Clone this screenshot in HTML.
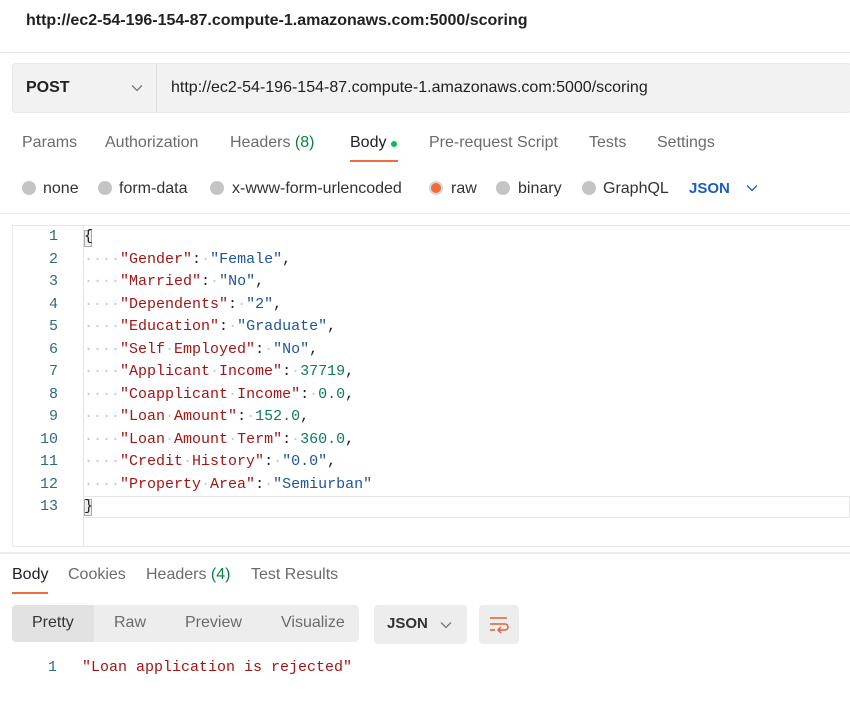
<!DOCTYPE html>
<html><head><meta charset="utf-8"><style>
*{margin:0;padding:0;box-sizing:border-box}
body{width:850px;height:718px;background:#fff;font-family:"Liberation Sans",sans-serif;color:#212121;position:relative;overflow:hidden}
.a{position:absolute;white-space:pre}
.t{font-size:16px;color:#6b6b6b}
.rd{position:absolute;width:14px;height:14px;border-radius:50%;background:#c4c4c4}
.code{position:absolute;left:0;font-family:"Liberation Mono",monospace;font-size:15px}
.ln{position:absolute;width:58px;text-align:right;color:#2d6a8a;font-family:"Liberation Mono",monospace;font-size:15px}
.k{color:#a31515}.s{color:#1c5599}.n{color:#0e7a63}.d{color:#c8c8c8}
</style></head><body>
<div class="a" style="left:26px;top:12px;font-size:16px;font-weight:bold;color:#212121">http://ec2-54-196-154-87.compute-1.amazonaws.com:5000/scoring</div>
<div class="a" style="left:0;top:52px;width:850px;height:1px;background:#e6e6e6"></div>
<div class="a" style="left:12px;top:63px;width:840px;height:50px;background:#f2f2f2;border:1px solid #e8e8e8;border-radius:4px"></div>
<div class="a" style="left:156px;top:64px;width:1px;height:48px;background:#e0e0e0"></div>
<div class="a" style="left:26px;top:79px;font-size:16px;font-weight:bold">POST</div>
<svg class="a" style="left:131px;top:84px" width="12" height="8"><path d="M1 1.5L6 6.5L11 1.5" stroke="#777" fill="none" stroke-width="1.3"/></svg>
<div class="a" style="left:171px;top:79px;font-size:16px;color:#212121">http://ec2-54-196-154-87.compute-1.amazonaws.com:5000/scoring</div>

<div class="a t" style="left:22px;top:134px">Params</div>
<div class="a t" style="left:105px;top:134px">Authorization</div>
<div class="a t" style="left:230px;top:134px">Headers <span style="color:#0b8043">(8)</span></div>
<div class="a t" style="left:350px;top:134px;color:#212121">Body</div>
<div class="a" style="left:391px;top:141px;width:6px;height:6px;border-radius:50%;background:#0cbb52"></div>
<div class="a" style="left:350px;top:160px;width:48px;height:2px;background:#f26b3a"></div>
<div class="a t" style="left:429px;top:134px">Pre-request Script</div>
<div class="a t" style="left:589px;top:134px">Tests</div>
<div class="a t" style="left:657px;top:134px">Settings</div>

<div class="rd" style="left:22px;top:181px"></div><div class="a t" style="left:43px;top:180px;color:#333">none</div>
<div class="rd" style="left:98px;top:181px"></div><div class="a t" style="left:119px;top:180px;color:#333">form-data</div>
<div class="rd" style="left:210px;top:181px"></div><div class="a t" style="left:232px;top:180px;color:#333">x-www-form-urlencoded</div>
<div class="rd" style="left:429px;top:181px;background:#f26b3a;border:2px solid #d8d8d8"></div><div class="a t" style="left:451px;top:180px;color:#333">raw</div>
<div class="rd" style="left:496px;top:181px"></div><div class="a t" style="left:518px;top:180px;color:#333">binary</div>
<div class="rd" style="left:582px;top:181px"></div><div class="a t" style="left:603px;top:180px;color:#333">GraphQL</div>
<div class="a" style="left:689px;top:180px;font-size:15px;font-weight:bold;color:#1c5cc4">JSON</div>
<svg class="a" style="left:746px;top:184px" width="12" height="8"><path d="M1 1.5L6 6.5L11 1.5" stroke="#1c5cc4" fill="none" stroke-width="1.3"/></svg>
<div class="a" style="left:0;top:213px;width:850px;height:1px;background:#ececec"></div>

<div class="a" style="left:12px;top:225px;width:840px;height:322px;border:1px solid #e8e8e8;border-right:none"></div>
<div class="a" style="left:83px;top:226px;width:1px;height:320px;background:#e3e3e3"></div>
<div class="a" style="left:84px;top:496px;width:766px;height:22px;border:1px solid #e6e6e6;border-left:none"></div>
<div class="a" style="left:84px;top:230px;width:8px;height:17px;border:1px solid #aaa;background:#eee"></div>
<div class="a" style="left:84px;top:499px;width:8px;height:17px;border:1px solid #aaa;background:#eee"></div>

<div style="position:absolute;left:0;top:228px">
<div class="ln" style="top:0">1</div><div class="code" style="left:84px;top:0">{</div>
<div class="ln" style="top:22.5px">2</div><div class="code" style="left:84px;top:22.5px"><span class="d">····</span><span class="k">"Gender"</span>:<span class="d">·</span><span class="s">"Female"</span>,</div>
<div class="ln" style="top:45px">3</div><div class="code" style="left:84px;top:45px"><span class="d">····</span><span class="k">"Married"</span>:<span class="d">·</span><span class="s">"No"</span>,</div>
<div class="ln" style="top:67.5px">4</div><div class="code" style="left:84px;top:67.5px"><span class="d">····</span><span class="k">"Dependents"</span>:<span class="d">·</span><span class="s">"2"</span>,</div>
<div class="ln" style="top:90px">5</div><div class="code" style="left:84px;top:90px"><span class="d">····</span><span class="k">"Education"</span>:<span class="d">·</span><span class="s">"Graduate"</span>,</div>
<div class="ln" style="top:112.5px">6</div><div class="code" style="left:84px;top:112.5px"><span class="d">····</span><span class="k">"Self<span class="d">·</span>Employed"</span>:<span class="d">·</span><span class="s">"No"</span>,</div>
<div class="ln" style="top:135px">7</div><div class="code" style="left:84px;top:135px"><span class="d">····</span><span class="k">"Applicant<span class="d">·</span>Income"</span>:<span class="d">·</span><span class="n">37719</span>,</div>
<div class="ln" style="top:157.5px">8</div><div class="code" style="left:84px;top:157.5px"><span class="d">····</span><span class="k">"Coapplicant<span class="d">·</span>Income"</span>:<span class="d">·</span><span class="n">0.0</span>,</div>
<div class="ln" style="top:180px">9</div><div class="code" style="left:84px;top:180px"><span class="d">····</span><span class="k">"Loan<span class="d">·</span>Amount"</span>:<span class="d">·</span><span class="n">152.0</span>,</div>
<div class="ln" style="top:202.5px">10</div><div class="code" style="left:84px;top:202.5px"><span class="d">····</span><span class="k">"Loan<span class="d">·</span>Amount<span class="d">·</span>Term"</span>:<span class="d">·</span><span class="n">360.0</span>,</div>
<div class="ln" style="top:225px">11</div><div class="code" style="left:84px;top:225px"><span class="d">····</span><span class="k">"Credit<span class="d">·</span>History"</span>:<span class="d">·</span><span class="s">"0.0"</span>,</div>
<div class="ln" style="top:247.5px">12</div><div class="code" style="left:84px;top:247.5px"><span class="d">····</span><span class="k">"Property<span class="d">·</span>Area"</span>:<span class="d">·</span><span class="s">"Semiurban"</span></div>
<div class="ln" style="top:270px">13</div><div class="code" style="left:84px;top:270px">}</div>
</div>

<div class="a" style="left:0;top:552px;width:850px;height:2px;background:#ececec"></div>
<div class="a t" style="left:12px;top:566px;color:#212121">Body</div>
<div class="a" style="left:12px;top:592px;width:36px;height:2px;background:#f26b3a"></div>
<div class="a t" style="left:68px;top:566px">Cookies</div>
<div class="a t" style="left:146px;top:566px">Headers <span style="color:#0b8043">(4)</span></div>
<div class="a t" style="left:251px;top:566px">Test Results</div>

<div class="a" style="left:12px;top:605px;width:347px;height:37px;background:#ededed;border-radius:4px"></div>
<div class="a" style="left:12px;top:605px;width:82px;height:37px;background:#e2e2e2;border-radius:4px 0 0 4px"></div>
<div class="a t" style="left:32px;top:614px;color:#333">Pretty</div>
<div class="a t" style="left:114px;top:614px">Raw</div>
<div class="a t" style="left:185px;top:614px">Preview</div>
<div class="a t" style="left:281px;top:614px">Visualize</div>
<div class="a" style="left:374px;top:605px;width:93px;height:39px;background:#ededed;border-radius:4px"></div>
<div class="a" style="left:387px;top:615px;font-size:15px;font-weight:bold;color:#333">JSON</div>
<svg class="a" style="left:440px;top:621px" width="12" height="8"><path d="M1 1.5L6 6.5L11 1.5" stroke="#777" fill="none" stroke-width="1.3"/></svg>
<div class="a" style="left:479px;top:605px;width:40px;height:39px;background:#ededed;border-radius:4px"></div>
<svg class="a" style="left:488px;top:615px" width="22" height="20"><path d="M2 3H19M2 9H17a3 3 0 0 1 0 6H10M13 12l-3 3l3 3M2 15H7" stroke="#e0603a" fill="none" stroke-width="1.5"/></svg>

<div class="a" style="left:48px;top:659px;font-family:'Liberation Mono',monospace;font-size:15px;color:#2d6a8a">1</div>
<div class="a" style="left:82px;top:659px;font-family:'Liberation Mono',monospace;font-size:15px;color:#a31515">"Loan application is rejected"</div>
</body></html>
